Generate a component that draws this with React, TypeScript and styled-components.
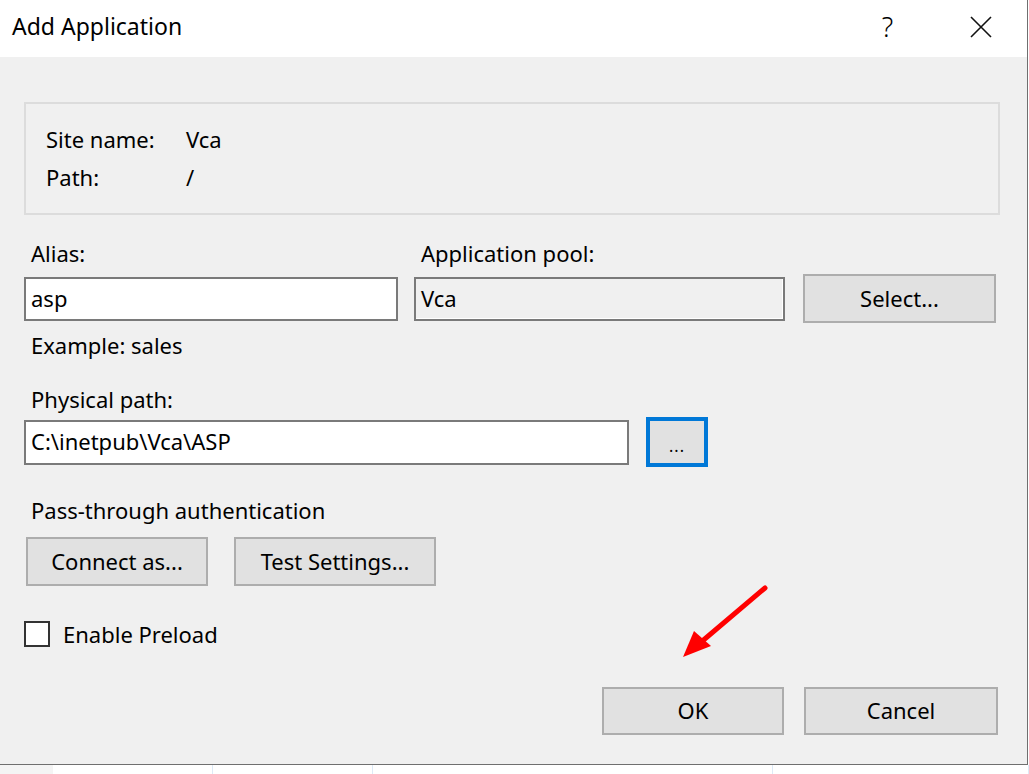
import React from "react";
import styled, { createGlobalStyle } from "styled-components";

const GlobalStyle = createGlobalStyle`
  html, body {
    margin: 0;
    padding: 0;
    background: #ffffff;
  }
  body {
    font-family: "Noto Sans", "Segoe UI", "Liberation Sans", sans-serif;
    color: #000000;
  }
`;

const Page = styled.div`
  display: flex;
  flex-direction: column;
  width: 1029px;
  height: 774px;
  overflow: hidden;
`;

const Dialog = styled.div`
  position: relative;
  display: flex;
  flex-direction: column;
  width: 1028px;
  height: 765px;
  box-sizing: border-box;
  background: #f0f0f0;
  border-right: 1px solid #6f6f6f;
  border-bottom: 1px solid #6f6f6f;
  font-size: 22px;
`;

const TitleBar = styled.div`
  display: flex;
  align-items: flex-start;
  height: 57px;
  flex-shrink: 0;
  background: #ffffff;
`;

const Title = styled.div`
  flex: 1;
  padding-left: 12px;
  line-height: 53px;
  font-size: 23px;
`;

const CaptionButton = styled.div`
  display: flex;
  align-items: center;
  justify-content: center;
  width: 93px;
  height: 57px;
  font-size: 27px;
  font-weight: 300;
  padding-bottom: 4px;
  box-sizing: border-box;
`;

const Body = styled.div`
  display: flex;
  flex-direction: column;
  padding: 45px 27px 0 24px;
`;

const InfoBox = styled.div`
  border: 2px solid #dcdcdc;
  padding: 16px 20px 17px;
`;

const InfoRow = styled.div`
  display: flex;
  line-height: 38px;
`;

const InfoLabel = styled.span`
  width: 140px;
`;

const Label = styled.div<{ $top: number; $bottom?: number }>`
  line-height: 30px;
  padding-left: 7px;
  margin-top: ${(p) => p.$top}px;
  margin-bottom: ${(p) => p.$bottom ?? 0}px;
  white-space: nowrap;
`;

const FieldRow = styled.div`
  display: flex;
  align-items: flex-start;
`;

const Column = styled.div<{ $width?: number }>`
  display: flex;
  flex-direction: column;
  width: ${(p) => (p.$width ? `${p.$width}px` : "auto")};
  flex: ${(p) => (p.$width ? "none" : "1")};
`;

const InputRow = styled.div<{ $gap: number }>`
  display: flex;
  align-items: center;
  gap: ${(p) => p.$gap}px;
`;

const TextBox = styled.div<{ $width: number; $height: number; $readOnly?: boolean }>`
  box-sizing: border-box;
  width: ${(p) => p.$width}px;
  height: ${(p) => p.$height}px;
  display: flex;
  align-items: center;
  padding: 0 5px 2px;
  border: 2px solid #7a7a7a;
  background: ${(p) => (p.$readOnly ? "#f0f0f0" : "#ffffff")};
  box-shadow: ${(p) => (p.$readOnly ? "inset -1px -1px 0 #ffffff" : "none")};
  white-space: nowrap;
`;

const Button = styled.div<{ $width: number; $height: number; $focused?: boolean }>`
  box-sizing: border-box;
  display: flex;
  align-items: center;
  justify-content: center;
  width: ${(p) => p.$width}px;
  height: ${(p) => p.$height}px;
  background: #e1e1e1;
  border: ${(p) => (p.$focused ? "4px solid #0078d7" : "2px solid #adadad")};
  padding-bottom: 2px;
  white-space: nowrap;
`;

const Dots = styled.span`
  font-size: 16px;
  padding-top: 10px;
  letter-spacing: 1px;
`;

const ButtonRow = styled.div<{ $top: number }>`
  display: flex;
  gap: 26px;
  margin-top: ${(p) => p.$top}px;
  margin-left: 2px;
`;

const CheckRow = styled.div`
  display: flex;
  align-items: center;
  gap: 13px;
  margin-top: 33px;
  line-height: 30px;
`;

const CheckBox = styled.div`
  box-sizing: border-box;
  width: 26px;
  height: 26px;
  border: 2px solid #333333;
  background: #ffffff;
`;

const Footer = styled.div`
  display: flex;
  justify-content: flex-end;
  gap: 20px;
  margin-top: 38px;
  margin-right: 2px;
`;

const Arrow = styled.svg`
  position: absolute;
  left: 0;
  top: 0;
  pointer-events: none;
`;

const Strip = styled.div`
  display: flex;
  height: 9px;
  flex-shrink: 0;
`;

const StripCell = styled.div<{ $width?: number; $shade?: boolean }>`
  box-sizing: border-box;
  width: ${(p) => (p.$width ? `${p.$width}px` : "auto")};
  flex: ${(p) => (p.$width ? "none" : "1")};
  background: ${(p) => (p.$shade ? "#f4f4f4" : "#ffffff")};
  border-right: ${(p) => (p.$shade ? "none" : "1px solid #dde9f6")};
`;

export default function App() {
  return (
    <Page>
      <GlobalStyle />
      <Dialog>
        <TitleBar>
          <Title>Add Application</Title>
          <CaptionButton>?</CaptionButton>
          <CaptionButton>
            <svg width="22" height="22" viewBox="0 0 22 22">
              <path d="M1 1 L21 21 M21 1 L1 21" stroke="#111" strokeWidth="1.6" fill="none" />
            </svg>
          </CaptionButton>
        </TitleBar>
        <Body>
          <InfoBox>
            <InfoRow>
              <InfoLabel>Site name:</InfoLabel>
              <span>Vca</span>
            </InfoRow>
            <InfoRow>
              <InfoLabel>Path:</InfoLabel>
              <span>/</span>
            </InfoRow>
          </InfoBox>

          <FieldRow>
            <Column $width={390}>
              <Label $top={23} $bottom={9}>Alias:</Label>
              <TextBox $width={374} $height={44}>asp</TextBox>
            </Column>
            <Column>
              <Label $top={23} $bottom={6}>Application pool:</Label>
              <InputRow $gap={18}>
                <TextBox $width={371} $height={44} $readOnly>Vca</TextBox>
                <Button $width={193} $height={49}>Select...</Button>
              </InputRow>
            </Column>
          </FieldRow>

          <Label $top={7}>Example: sales</Label>
          <Label $top={24} $bottom={3}>Physical path:</Label>
          <InputRow $gap={17}>
            <TextBox $width={605} $height={45}>C:\inetpub\Vca\ASP</TextBox>
            <Button $width={62} $height={50} $focused>
              <Dots>...</Dots>
            </Button>
          </InputRow>

          <Label $top={28}>Pass-through authentication</Label>
          <ButtonRow $top={12}>
            <Button $width={182} $height={49}>Connect as...</Button>
            <Button $width={202} $height={49}>Test Settings...</Button>
          </ButtonRow>

          <CheckRow>
            <CheckBox />
            <span>Enable Preload</span>
          </CheckRow>

          <Footer>
            <Button $width={182} $height={48}>OK</Button>
            <Button $width={194} $height={48}>Cancel</Button>
          </Footer>
        </Body>

        <Arrow width="1028" height="765" viewBox="0 0 1028 765">
          <line x1="765" y1="588" x2="700" y2="643" stroke="#ff0000" strokeWidth="5" strokeLinecap="round" />
          <polygon points="683,657 694,631 711,646" fill="#ff0000" />
        </Arrow>
      </Dialog>
      <Strip>
        <StripCell $width={53} $shade />
        <StripCell $width={160} />
        <StripCell $width={160} />
        <StripCell $width={400} />
        <StripCell />
      </Strip>
    </Page>
  );
}
